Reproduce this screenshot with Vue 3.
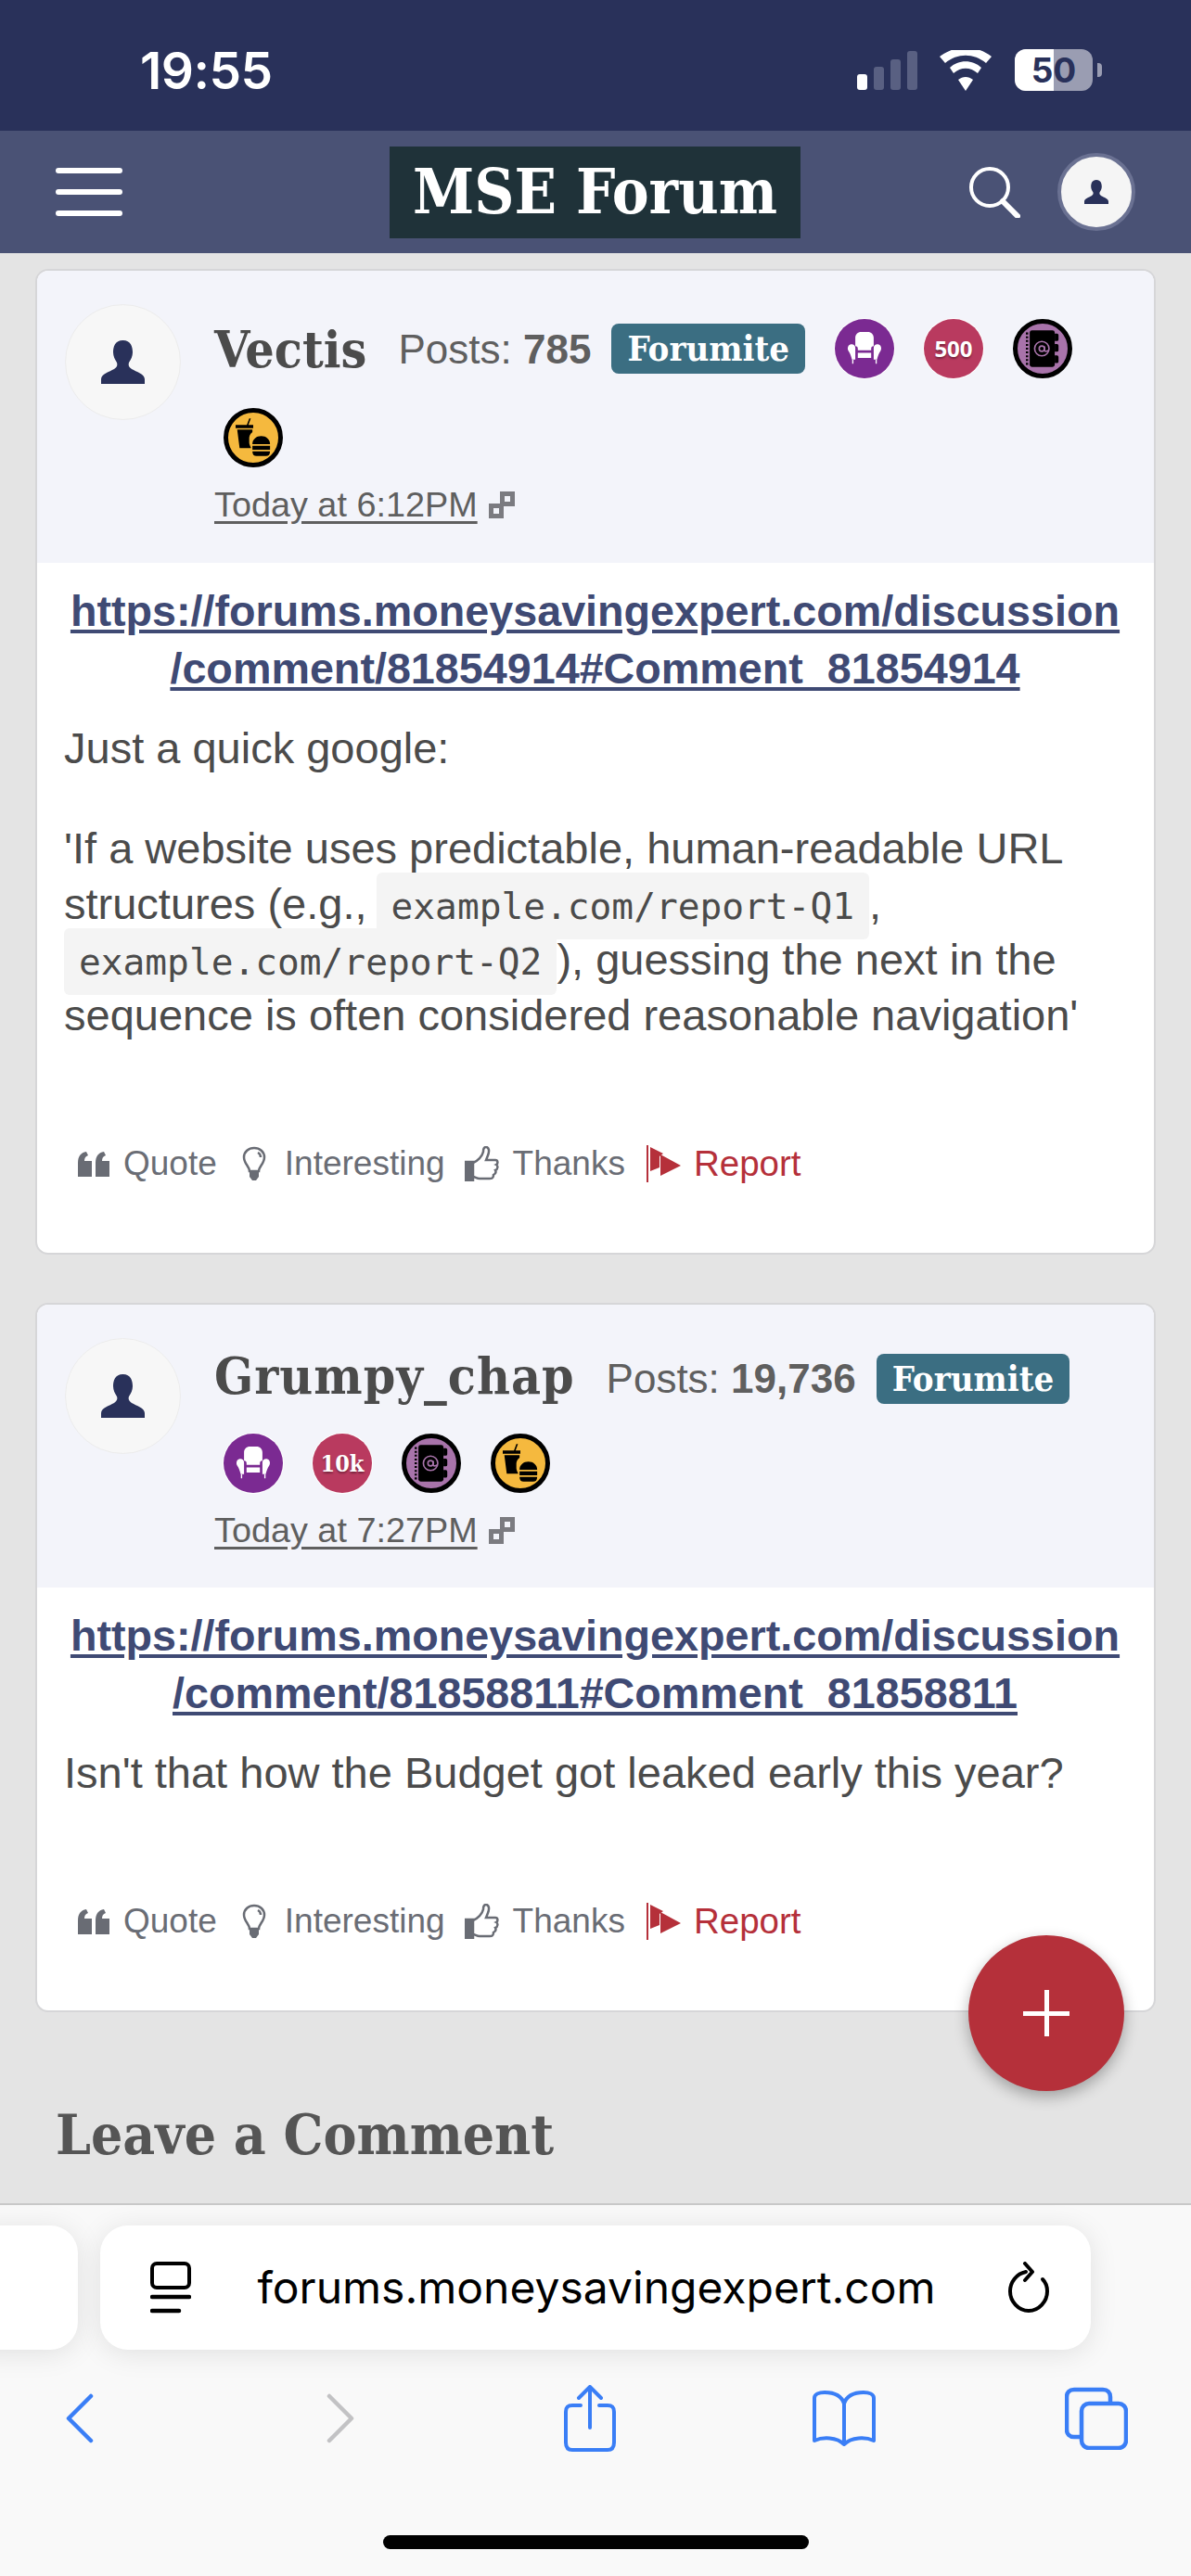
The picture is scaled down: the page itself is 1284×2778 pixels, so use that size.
<script setup>
const posts = [
  {
    name: 'Vectis', count: '785', date: 'Today at 6:12PM', bigHead: true,
    url: ['https://forums.moneysavingexpert.com/discussion', '/comment/81854914#Comment_81854914'],
    badges: ['chair', '500', 'book', 'food']
  },
  {
    name: 'Grumpy_chap', count: '19,736', date: 'Today at 7:27PM',
    url: ['https://forums.moneysavingexpert.com/discussion', '/comment/81858811#Comment_81858811'],
    badges: ['chair', '10k', 'book', 'food']
  }
]
</script>

<template>
  <div class="phone">
    <div class="status">
      <span class="time">19:55</span>
      <div class="status-icons">
        <svg class="signal" width="66" height="42" viewBox="0 0 66 42">
          <rect x="0" y="25" width="11" height="17" rx="3" fill="#fff" />
          <rect x="18" y="17" width="11" height="25" rx="3" fill="#596082" />
          <rect x="36" y="9" width="11" height="33" rx="3" fill="#596082" />
          <rect x="54" y="0" width="11" height="42" rx="3" fill="#596082" />
        </svg>
        <svg class="wifi" width="58" height="44" viewBox="0 0 58 44">
          <path d="M29 44 21 32c5-4 11-4 16 0z" fill="#fff" />
          <path d="M16 25c8-7 18-7 26 0l4-6C37 10 21 10 12 19z" fill="#fff" />
          <path d="M7 14C20 3 38 3 51 14l6-7C40-6 18-6 1 7z" fill="#fff" />
        </svg>
        <div class="battery">
          <span class="battery-fill"></span>
          <span class="battery-label">50</span>
        </div>
        <span class="battery-nub"></span>
      </div>
    </div>

    <header class="topbar">
      <div class="burger"><span></span><span></span><span></span></div>
      <div class="logo">MSE Forum</div>
      <div class="top-right">
        <svg width="56" height="56" viewBox="0 0 56 56" fill="none" stroke="#fff">
          <circle cx="23" cy="23" r="20" stroke-width="4" />
          <path d="M37 38 53 54" stroke-width="6" stroke-linecap="round" />
        </svg>
        <div class="me">
          <svg width="26" height="30" viewBox="0 0 47 47"><path d="M23.5 0C15 0 13 7 13 13c0 4 2 8 4 11 1 3 0 5-3 7-5 3-14 5-14 11v5h47v-5c0-6-9-8-14-11-3-2-4-4-3-7 2-3 4-7 4-11 0-6-2-13-10.500-13z" fill="#29315a" /></svg>
        </div>
      </div>
    </header>

    <main class="content">
      <article v-for="post in posts" :key="post.name" class="card">
        <div class="card-head" :class="{ tall: post.bigHead }">
          <div class="avatar">
            <svg width="47" height="47" viewBox="0 0 47 47"><path d="M23.500 0C15 0 13 7 13 13c0 4 2 8 4 11 1 3 0 5-3 7-5 3-14 5-14 11v5h47v-5c0-6-9-8-14-11-3-2-4-4-3-7 2-3 4-7 4-11 0-6-2-13-10.500-13z" fill="#29315a" /></svg>
          </div>
          <div class="meta">
            <div class="meta-row">
              <span class="name">{{ post.name }}</span>
              <span class="posts">Posts: <b>{{ post.count }}</b></span>
              <span class="role">Forumite</span>
              <span v-for="b in post.badges" :key="b" class="medal" :class="'medal-' + b">
                <svg v-if="b === 'chair'" width="42" height="40" viewBox="0 0 42 40">
                  <path d="M10 17V7c0-4 3-7 7-7h8c4 0 7 3 7 7v10c-2 0-3 1-3 3v2H13v-2c0-2-1-3-3-3z" fill="#fff" />
                  <path d="M13 25h16v6H13zM4 15c3-1 6 1 6 4v14H6c-1-4-2-7-4-10-2-3-1-7 2-8zM38 15c-3-1-6 1-6 4v14h4c1-4 2-7 4-10 2-3 1-7-2-8z" fill="#fff" />
                  <path d="M7 33v5M35 33v5" stroke="#fff" stroke-width="1.500" />
                </svg>
                <svg v-else-if="b === 'book'" width="44" height="48" viewBox="0 0 44 48">
                  <rect x="5" y="0" width="33" height="48" rx="3" fill="#000" />
                  <path d="M0 4h3M0 9h3M0 14h3M0 19h3M0 24h3M0 29h3M0 34h3M0 39h3M0 44h3" stroke="#000" stroke-width="2.500" />
                  <path d="M38 4h3a2 2 0 0 1 2 2v6a2 2 0 0 1-2 2h-3zM38 18h3a2 2 0 0 1 2 2v6a2 2 0 0 1-2 2h-3zM38 33h3a2 2 0 0 1 2 2v6a2 2 0 0 1-2 2h-3z" fill="#000" />
                  <circle cx="21" cy="24" r="9.500" fill="none" stroke="#a873aa" stroke-width="2" />
                  <circle cx="21" cy="24" r="3.500" fill="none" stroke="#a873aa" stroke-width="2" />
                  <path d="M24.500 21v5c0 2 4 2 5 0" fill="none" stroke="#a873aa" stroke-width="2" />
                </svg>
                <svg v-else-if="b === 'food'" width="44" height="48" viewBox="0 0 44 48">
                  <path d="M14 8 17 0h2l-3 8h6v4H0V8zM2 14h19v3c-3 2-4 5-4 8v5c0 2 1 4 2 6v1H5z" fill="#000" />
                  <path d="M21 32c0-6 5-10 11-10s11 4 11 10zM21 34h22v5H21zM21 41h22c0 4-2 6-5 6H26c-3 0-5-2-5-6z" fill="#000" />
                </svg>
                <span v-else class="medal-text">{{ b }}</span>
              </span>
            </div>
            <div class="date">
              <a>{{ post.date }}</a>
              <svg width="28" height="29" viewBox="0 0 28 29" fill="#7b7b80" fill-rule="evenodd">
                <path d="M12 0h16v16H12zM17 5v6h6V5z" />
                <path d="M0 13h16v16H0zM5 18v6h6v-6z" />
                <path d="M9 16l5-5 3 3-5 5z" />
              </svg>
            </div>
          </div>
        </div>
        <div class="card-body">
          <a class="permalink">{{ post.url[0] }}<br />{{ post.url[1] }}</a>
          <template v-if="post.bigHead">
            <p class="intro">Just a quick google:</p>
            <p class="para">'If a website uses predictable, human-readable URL<br />structures (e.g., <code class="code-first">example.com/report-Q1</code>,<br /><code>example.com/report-Q2</code>), guessing the next in the<br />sequence is often considered reasonable navigation'</p>
          </template>
          <p v-else class="intro">Isn't that how the Budget got leaked early this year?</p>
        </div>
        <div class="actions">
          <span class="action a-quote">
            <svg width="34" height="27" viewBox="0 0 34 27" fill="#696c74"><path d="M0 27V12C0 5 3 1 9 0l2 4C8 5 7 7 7 10h8v17zM19 27V12c0-7 3-11 9-12l2 4c-3 1-4 3-4 6h8v17z" /></svg>
            Quote
          </span>
          <span class="action a-idea">
            <svg width="26" height="38" viewBox="0 0 26 38" fill="none" stroke="#696c74" stroke-width="2.500"><path d="M8 27c0-5-6-8-6-15C2 6 7 2 13 2s11 4 11 10c0 7-6 10-6 15z" /><path d="M17 7c2 1 3 3 3 5" /><path d="M8 28h10v5l-3 4h-4l-3-4z" fill="#696c74" stroke="none" /></svg>
            Interesting
          </span>
          <span class="action a-thanks">
            <svg width="37" height="38" viewBox="0 0 37 38" fill="none" stroke="#696c74" stroke-width="2.500"><path d="M1 17h8v20H1z" fill="#696c74" /><path d="M9 18c5-2 10-7 11-12 0-3 1-5 3-5 3 0 4 4 2 9l-2 5h10c3 0 3 4 1 5 2 1 2 5-1 6 1 2 0 4-2 5 0 3-1 4-4 4H16c-3 0-5-2-7-2" /></svg>
            Thanks
          </span>
          <span class="action a-report">
            <svg width="37" height="40" viewBox="0 0 37 40" fill="#b5303a"><path d="M0 0h2v40H0zM4 2l14 7-4 3 0 12-10 4zM15 10l22 12-22 11z" /></svg>
            Report
          </span>
        </div>
      </article>
      <h2 class="leave">Leave a Comment</h2>
      <button class="fab"><span class="plus"></span></button>
    </main>

    <footer class="toolbar">
      <div class="url-row">
        <div class="prev-tab"></div>
        <div class="url">
          <svg width="44" height="56" viewBox="0 0 44 56" fill="none" stroke="#000"><rect x="2" y="2" width="40" height="26" rx="5" stroke-width="4" /><path d="M2 38h40" stroke-width="4.500" stroke-linecap="round" /><path d="M2 53h29" stroke-width="4.500" stroke-linecap="round" /></svg>
          <span class="url-text">forums.moneysavingexpert.com</span>
          <svg width="46" height="56" viewBox="0 0 46 56" fill="none" stroke="#000" stroke-width="4" stroke-linecap="round" stroke-linejoin="round"><path d="M20 11C10 13 3 22 3 32c0 11 9 21 20 21s20-10 20-21c0-5-2-10-5-13" /><path d="M19 2l8 9-8 9" /></svg>
        </div>
      </div>
      <nav class="nav">
        <svg class="n-back" width="30" height="54" viewBox="0 0 30 54" fill="none" stroke="#3a7ef6" stroke-width="4.500" stroke-linecap="round" stroke-linejoin="round"><path d="M27 3 3 27l24 24" /></svg>
        <svg class="n-fwd" width="30" height="54" viewBox="0 0 30 54" fill="none" stroke="#c2c2c4" stroke-width="4.500" stroke-linecap="round" stroke-linejoin="round"><path d="M3 3l24 24L3 51" /></svg>
        <svg class="n-share" width="56" height="72" viewBox="0 0 56 72" fill="none" stroke="#3a7ef6" stroke-width="4" stroke-linecap="round" stroke-linejoin="round"><path d="M18 22H9c-5 0-7 2-7 7v33c0 5 2 8 7 8h38c5 0 7-3 7-8V29c0-5-2-7-7-7h-9" /><path d="M28 46V2M16 14 28 2l12 12" /></svg>
        <svg class="n-book" width="70" height="60" viewBox="0 0 70 60" fill="none" stroke="#3a7ef6" stroke-width="4" stroke-linejoin="round"><path d="M35 14C32 5 24 2 14 2 8 2 3 4 3 8v46c9-4 24-4 32 4 8-8 23-8 32-4V8c0-4-5-6-11-6-10 0-18 3-21 12zM35 14v44" /></svg>
        <svg class="n-tabs" width="68" height="68" viewBox="0 0 68 68" fill="none" stroke="#3a7ef6" stroke-width="4.500"><path d="M17 54H10c-5 0-8-3-8-8V11c0-5 3-8 8-8h31c5 0 8 3 8 8v6" /><rect x="18" y="18" width="48" height="48" rx="8" /></svg>
      </nav>
      <div class="home"></div>
    </footer>
  </div>
</template>

<style>
html, body { margin: 0; background: #e4e4e4; }
</style>

<style scoped>
.phone {
  width: 1284px;
  height: 2778px;
  display: flex;
  flex-direction: column;
  overflow: hidden;
  font-family: "Liberation Sans", Arial, sans-serif;
  background: #e4e4e4;
  color: #4b4b4b;
}
.status {
  height: 141px;
  flex: none;
  box-sizing: border-box;
  background: #29315a;
  padding: 44px 96px 0 151px;
  display: flex;
  justify-content: space-between;
  align-items: flex-start;
}
.time {
  color: #fff;
  font: 600 55px/64px Inter, "Liberation Sans", sans-serif;
  letter-spacing: -.5px;
}
.status-icons {
  display: flex;
  align-items: center;
  margin-top: 9px;
}
.wifi { margin-left: 22px; }
.battery {
  position: relative;
  width: 84px;
  height: 45px;
  margin-left: 24px;
  border-radius: 12px;
  overflow: hidden;
  background: #9a9db2;
  text-align: center;
  font: 700 37px/45px Inter, "Liberation Sans", sans-serif;
  color: #29315a;
}
.battery-fill {
  position: absolute;
  left: 0;
  top: 0;
  bottom: 0;
  width: 42px;
  background: #fff;
}
.battery-label { position: relative; }
.battery-nub {
  width: 5px;
  height: 15px;
  margin-left: 5px;
  border-radius: 0 4px 4px 0;
  background: #9a9db2;
}
.topbar {
  height: 132px;
  flex: none;
  box-sizing: border-box;
  background: #4a5275;
  padding: 0 60px;
  display: grid;
  grid-template-columns: 360px 443px 1fr;
  align-items: center;
}
.burger {
  display: flex;
  flex-direction: column;
  gap: 17px;
  width: 72px;
}
.burger span {
  height: 6px;
  border-radius: 3px;
  background: #fff;
}
.logo {
  height: 99px;
  background: #1f3239;
  color: #fff;
  text-align: center;
  font: 700 66.500px/99px "DejaVu Serif Condensed", "DejaVu Serif", serif;
  font-stretch: condensed;
}
.top-right {
  display: flex;
  align-items: center;
  justify-content: flex-end;
  gap: 40px;
}
.me {
  width: 76px;
  height: 76px;
  border-radius: 50%;
  background: #f5f5f5;
  border: 4px solid #6a7192;
  display: flex;
  align-items: center;
  justify-content: center;
}
.content {
  position: relative;
  flex: 1;
  min-height: 0;
  padding: 17px 38px 0;
}
.card {
  background: #fff;
  border: 2px solid #d6d6d8;
  border-radius: 14px;
  overflow: hidden;
  margin-bottom: 52px;
}
.card-head {
  display: flex;
  background: #f3f4fa;
  height: 305px;
  padding: 36px 15px 0 30px;
  box-sizing: border-box;
}
.card-head.tall { height: 315px; }
.avatar {
  width: 125px;
  height: 125px;
  flex: none;
  box-sizing: border-box;
  border: 1px solid #ececec;
  border-radius: 50%;
  background: #f7f7f7;
  display: flex;
  align-items: center;
  justify-content: center;
}
.meta { margin-left: 36px; flex: 1; margin-top: 16px; }
.meta-row {
  display: flex;
  flex-wrap: wrap;
  align-items: center;
  column-gap: 22px;
  row-gap: 32px;
}
.name {
  font: 700 55px/55px "DejaVu Serif Condensed", "DejaVu Serif", serif;
  font-stretch: condensed;
  color: #4b4b4b;
  margin-right: 12px;
}
.card-head:not(.tall) .name { letter-spacing: 1px; line-height: 50px; margin-bottom: 5px; }
.posts {
  font-size: 44px;
  line-height: 55px;
  color: #5f5f5f;
}
.posts b { font-weight: 700; }
.role {
  background: #3b6e82;
  color: #fff;
  border-radius: 8px;
  height: 54px;
  padding: 0 17px;
  font: 700 38px/54px "DejaVu Serif Condensed", "DejaVu Serif", serif;
  font-stretch: condensed;
}
.medal {
  width: 64px;
  height: 64px;
  box-sizing: border-box;
  margin-left: 10px;
  border-radius: 50%;
  display: flex;
  align-items: center;
  justify-content: center;
}
.medal-chair { background: #7b2a92; box-shadow: 0 0 0 1px #fff; }
.medal-500, .medal-10k { background: #b93a5f; box-shadow: 0 0 0 1px #fff; }
.medal-book { background: #a873aa; border: 5px solid #000; }
.medal-book svg { width: 36px; height: 40px; }
.medal-food { background: #f5b93e; border: 5px solid #000; }
.medal-food svg { width: 38px; height: 42px; }
.medal-chair svg { width: 38px; height: 36px; }
.medal-text {
  color: #fff;
  font: 700 24px/1 "Open Sans", sans-serif;
  text-shadow: 0 2px 2px rgba(0, 0, 0, .35);
}
.medal-10k .medal-text { font-family: "DejaVu Serif Condensed", "DejaVu Serif", serif; font-size: 25px; }
.date {
  display: flex;
  align-items: center;
  gap: 12px;
  margin-top: 18px;
  color: #5f5f5f;
  font-size: 37.800px;
  line-height: 44px;
}
.date a { text-decoration: underline; text-underline-offset: 5px; }
.card-body {
  padding: 21px 30px 0 29px;
}
.permalink {
  display: block;
  text-align: center;
  font-weight: 700;
  font-size: 46.700px;
  line-height: 62px;
  color: #3f4a74;
  text-decoration: underline;
  text-underline-offset: 4px;
}
.card-body p {
  margin: 0;
  font-size: 47px;
  line-height: 60px;
  color: #4b4b4b;
}
.card-body p.intro { margin: 25px 0 0; }
.card-body p.para { margin-top: 48px; }
code {
  font: 39.500px/1 "DejaVu Sans Mono", monospace;
  background: #f4f4f4;
  border-radius: 6px;
  padding: 13px 16px;
  color: #4b4b4b;
}
code.code-first { margin-left: -3px; }
.actions {
  display: flex;
  align-items: center;
  padding: 0 0 0 44px;
  height: 80px;
  font-size: 37px;
  color: #6a6d75;
  margin: 90px 0 56px;
}
.action {
  display: flex;
  align-items: center;
  gap: 13px;
}
.a-quote { gap: 15px; margin-right: 27px; }
.a-idea { gap: 20px; margin-right: 21px; }
.a-thanks { gap: 15px; margin-right: 23px; }
.a-report { color: #b5303a; font-size: 38.500px; gap: 14px; }
.leave {
  margin: 97px 0 0 22px;
  font: 700 60px/70px "DejaVu Serif Condensed", "DejaVu Serif", serif;
  font-stretch: condensed;
  color: #555;
}
.fab {
  position: absolute;
  left: 1044px;
  top: 1814px;
  width: 168px;
  height: 168px;
  border: 0;
  border-radius: 50%;
  background: #b5303a;
  box-shadow: 0 6px 16px rgba(0, 0, 0, .3);
}
.plus {
  display: block;
  width: 50px;
  height: 50px;
  margin: auto;
  background:
    linear-gradient(#fff, #fff) center / 100% 5px no-repeat,
    linear-gradient(#fff, #fff) center / 5px 100% no-repeat;
}
.toolbar {
  height: 402px;
  flex: none;
  box-sizing: border-box;
  background: #f9f9f9;
  border-top: 2px solid #c8c8c8;
  position: relative;
  z-index: 1;
  padding-top: 22px;
}
.url-row {
  display: flex;
  gap: 24px;
  margin-left: -40px;
}
.prev-tab {
  width: 124px;
  height: 134px;
  background: #fff;
  border-radius: 30px;
  box-shadow: 0 4px 30px rgba(0, 0, 0, .1);
}
.url {
  width: 1068px;
  height: 134px;
  box-sizing: border-box;
  background: #fff;
  border-radius: 30px;
  box-shadow: 0 4px 30px rgba(0, 0, 0, .1);
  padding: 0 44px 0 54px;
  display: flex;
  align-items: center;
  justify-content: space-between;
}
.url-text {
  font: 400 48px/1 Inter, "Liberation Sans", sans-serif;
  color: #000;
  margin-right: 6px;
}
.nav {
  display: flex;
  align-items: center;
  padding: 38px 0 0 71px;
}
.n-fwd { margin-left: 251px; }
.n-share { margin-left: 226px; }
.n-book { margin-left: 211px; }
.n-tabs { margin-left: 203px; }
.home {
  width: 459px;
  height: 15px;
  margin: 90px auto 0;
  border-radius: 8px;
  background: #000;
}
</style>
